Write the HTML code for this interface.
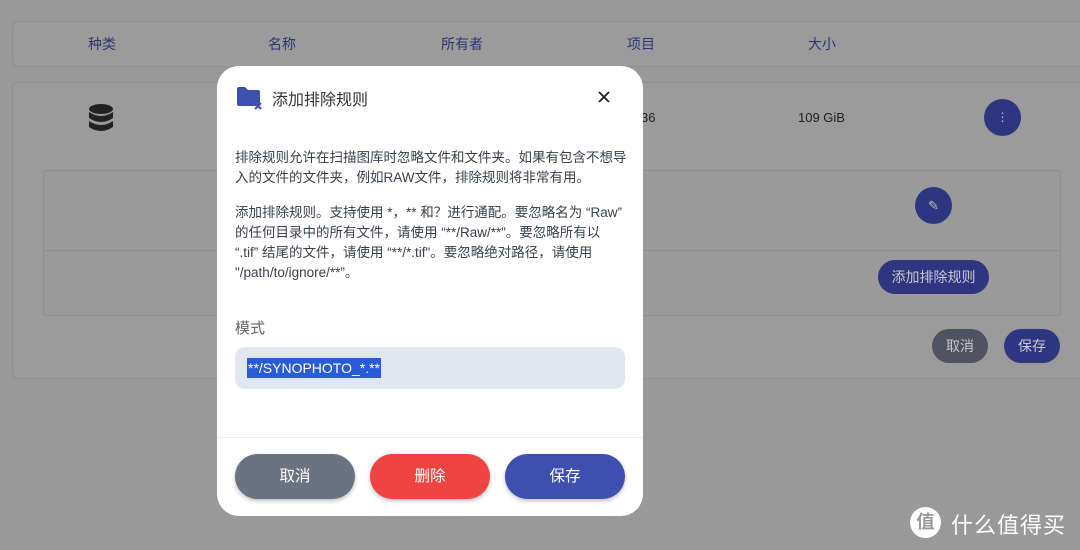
<!DOCTYPE html>
<html><head><meta charset="utf-8"><style>
*{margin:0;padding:0;box-sizing:border-box}
body{width:1080px;height:550px;background:#999;font-family:"Liberation Sans","Noto Sans CJK SC",sans-serif;position:relative;overflow:hidden}
.a{position:absolute}
.panel{background:#9b9b9b;border:1px solid #8f8f8f;border-radius:6px}
.hd{color:#2f3573;font-size:14px}
.dlg{left:217px;top:66px;width:426px;height:450px;background:#fff;border-radius:22px}
.p{font-size:13.5px;color:#3a3f4a;line-height:20px;left:18px;width:392px}
.btn{top:388px;width:120px;height:45px;border-radius:23px;color:#fff;font-size:15.5px;text-align:center;line-height:45px;box-shadow:0 2px 4px rgba(0,0,0,.25)}
</style></head><body>
<div class="a panel" style="left:12px;top:21px;width:1080px;height:46px"></div>
<div class="a hd" style="left:88px;top:34px">种类</div>
<div class="a hd" style="left:268px;top:34px">名称</div>
<div class="a hd" style="left:441px;top:34px">所有者</div>
<div class="a hd" style="left:627px;top:34px">项目</div>
<div class="a hd" style="left:808px;top:34px">大小</div>
<div class="a panel" style="left:12px;top:82px;width:1080px;height:297px"></div>
<svg class="a" style="left:88px;top:104px" width="26" height="28" viewBox="0 0 26 28"><g fill="#222"><ellipse cx="13" cy="5" rx="12" ry="5"/><path d="M1 8q12 8 24 0v6q-12 8-24 0z"/><path d="M1 17q12 8 24 0v6q-12 8-24 0z"/></g></svg>
<div class="a" style="left:641px;top:110px;font-size:13px;color:#222">36</div>
<div class="a" style="left:798px;top:110px;font-size:13px;color:#222">109 GiB</div>
<div class="a" style="left:984px;top:99px;width:37px;height:37px;border-radius:50%;background:#2e3680;color:#bbb;text-align:center;line-height:36px;font-size:12px">⋮</div>
<div class="a" style="left:43px;top:170px;width:1018px;height:146px;background:#9a9a9a;border:1px solid #8e8e8e;border-radius:4px"></div>
<div class="a" style="left:43px;top:250px;width:1018px;height:1px;background:#8e8e8e"></div>
<div class="a" style="left:915px;top:187px;width:37px;height:37px;border-radius:50%;background:#2e3680;color:#bbb;text-align:center;line-height:37px;font-size:13px">✎</div>
<div class="a" style="left:878px;top:260px;width:111px;height:34px;border-radius:17px;background:#2e3680;color:#c8c8d8;text-align:center;line-height:34px;font-size:14px">添加排除规则</div>
<div class="a" style="left:932px;top:329px;width:56px;height:34px;border-radius:17px;background:#4f5460;color:#c8c8c8;text-align:center;line-height:34px;font-size:14px">取消</div>
<div class="a" style="left:1004px;top:329px;width:56px;height:34px;border-radius:17px;background:#2e3680;color:#c8c8d8;text-align:center;line-height:34px;font-size:14px">保存</div>
<div class="a" style="left:910px;top:507px;width:31px;height:31px;border-radius:50%;background:#fff;color:#999;font-size:18px;text-align:center;line-height:31px;font-weight:bold">值</div>
<div class="a" style="left:951px;top:508px;color:#fff;font-size:22px;letter-spacing:1px">什么值得买</div>

<div class="a dlg">
<svg class="a" style="left:20px;top:21px" width="26" height="24" viewBox="0 0 26 24"><path d="M0 2q0-2 2-2h6l3 3h10q2 0 2 2v12q0 2-2 2H2q-2 0-2-2z" fill="#3f4fb0"/><path d="M18 16l6 6M24 16l-6 6" stroke="#3f4fb0" stroke-width="2.2"/></svg>
<div class="a" style="left:55px;top:20px;font-size:16px;color:#333">添加排除规则</div>
<svg class="a" style="left:381px;top:25px" width="12" height="12" viewBox="0 0 12 12"><path d="M1 1l10 10M11 1L1 11" stroke="#222" stroke-width="1.8"/></svg>
<div class="a p" style="top:82px">排除规则允许在扫描图库时忽略文件和文件夹。如果有包含不想导入的文件的文件夹，例如RAW文件，排除规则将非常有用。</div>
<div class="a p" style="top:137px">添加排除规则。支持使用 *，** 和？进行通配。要忽略名为 “Raw” 的任何目录中的所有文件，请使用 “**/Raw/**”。要忽略所有以 “.tif” 结尾的文件，请使用 “**/*.tif"。要忽略绝对路径，请使用 "/path/to/ignore/**”。</div>
<div class="a" style="left:18px;top:251px;font-size:15px;color:#666">模式</div>
<div class="a" style="left:18px;top:281px;width:390px;height:42px;background:#e1e7f0;border-radius:10px"></div>
<div class="a" style="left:30px;top:292px;height:20px;background:#2a5bd7;color:#fff;font-size:14px;line-height:20px;padding:0 1px">**/SYNOPHOTO_*.**</div>
<div class="a" style="left:0;top:371px;width:426px;height:1px;background:#eceef2"></div>
<div class="a btn" style="left:18px;background:#6b7280">取消</div>
<div class="a btn" style="left:153px;background:#ef4444">删除</div>
<div class="a btn" style="left:288px;background:#3f4fb0">保存</div>
</div>
</body></html>
